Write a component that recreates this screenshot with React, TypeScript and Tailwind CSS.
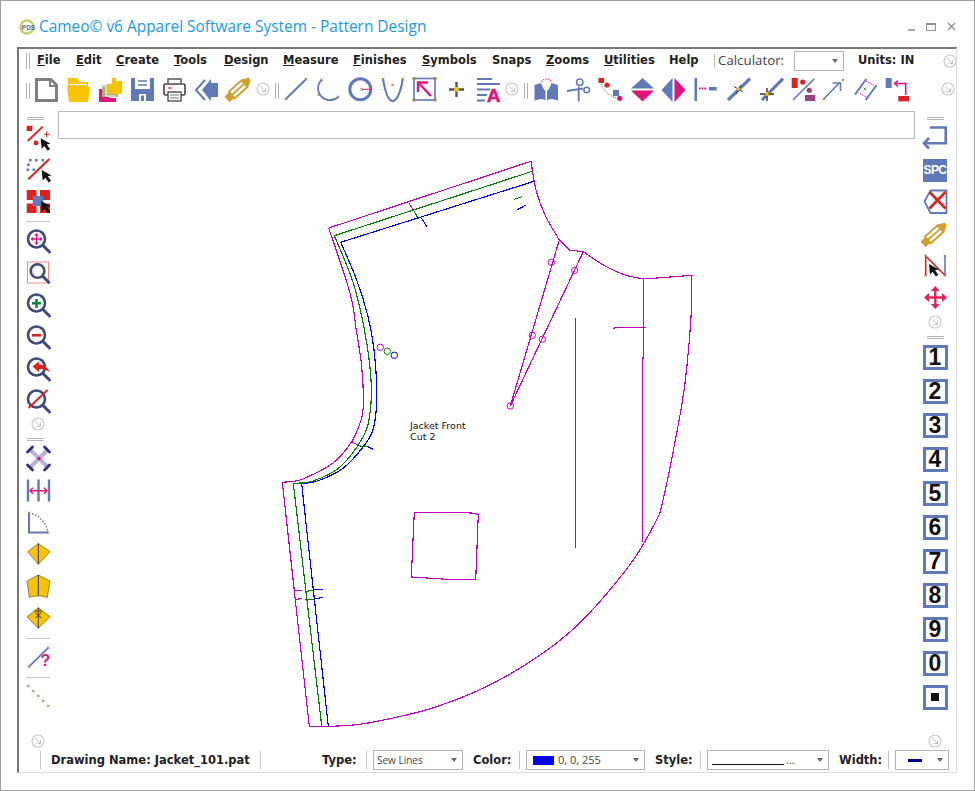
import type { ReactNode } from "react";

const BLUE = "#6079b8";
const PINK = "#e0147c";
const RED = "#e0201f";
const GOLD = "#f8c300";
const NAVY = "#3f4d78";
const TAN = "#a08850";
const MAG = "#c000c0";
const GRN = "#008000";
const BLU = "#0000ff";

// icons are written in page coordinates, the viewBox moves them into their slot
function Ic({ x, y, children }: { x: number; y: number; children: ReactNode }) {
  return (
    <svg width={32} height={32} viewBox={`${x} ${y} 32 32`} className="shrink-0">
      {children}
    </svg>
  );
}

function Tan({ x, y }: { x: number; y: number }) {
  return (
    <path
      d={`M${x - 1.3} ${y - 1.3}l2.6 2.6M${x + 1.3} ${y - 1.3}l-2.6 2.6`}
      stroke={TAN}
      strokeWidth={1}
      fill="none"
    />
  );
}

function Cursor({ x, y }: { x: number; y: number }) {
  return (
    <path
      d={`M${x} ${y}l1 10.5l2.6-2.8l3.4 4.8l2.4-1.7l-3.4-4.6l3.8-.8z`}
      fill="#111"
    />
  );
}

function Pencil({ cx, cy }: { cx: number; cy: number }) {
  return (
    <g transform={`translate(${cx} ${cy}) rotate(-42)`}>
      <rect x={-9} y={-4.4} width={17} height={8.8} fill="#fff" stroke="#cf9f2c" strokeWidth={1.9} />
      <path d="M-9 0H8" stroke="#cf9f2c" strokeWidth={1.8} />
      <path d="M-15.5 -3.8H-9V3.8H-15.5z" fill="#cf9f2c" />
      <path d="M8 -5.4L15 -1.5V1.5L8 5.4z" fill="#cf9f2c" />
    </g>
  );
}

function Glass({ y, x = 36.5, r = 8.5, children }: { y: number; x?: number; r?: number; children?: ReactNode }) {
  return (
    <g>
      <circle cx={x} cy={y} r={r} fill="none" stroke={NAVY} strokeWidth={2.6} />
      <path d={`M${x + r * 0.75} ${y + r * 0.75}L${x + r + 4.5} ${y + r + 4.5}`} stroke={NAVY} strokeWidth={3} strokeLinecap="round" />
      {children}
    </g>
  );
}

function ArrowCircle() {
  return (
    <svg width={16} height={16} viewBox="0 0 16 16" className="shrink-0">
      <circle cx={8} cy={8} r={6} fill="none" stroke="#cacaca" strokeWidth={1.2} />
      <path d="M5.2 5.2L10.4 10.4M10.6 6.6V10.6H6.6" fill="none" stroke="#c0c0c0" strokeWidth={1} />
    </svg>
  );
}

function GripV() {
  return (
    <div className="flex h-[16px] w-[4px] shrink-0 justify-between">
      <div className="w-px bg-[#b0b0b0]" />
      <div className="w-px bg-[#b0b0b0]" />
    </div>
  );
}

function GripH({ w = 17 }: { w?: number }) {
  return (
    <div className="flex h-[10px] shrink-0 flex-col justify-end gap-px pb-px" style={{ width: w }}>
      <div className="h-px bg-[#b8b8b8]" />
      <div className="h-px bg-[#b8b8b8]" />
    </div>
  );
}

function Sep({ h }: { h: number }) {
  return (
    <div className="flex w-[24px] shrink-0 items-center" style={{ height: h }}>
      <div className="h-px w-full bg-[#c4c4c4]" />
    </div>
  );
}

function Caret() {
  return <span className="h-0 w-0 border-x-[3.5px] border-t-[4px] border-x-transparent border-t-[#666]" />;
}

function Select({ w, children }: { w: number; children?: ReactNode }) {
  return (
    <div
      className="flex h-[20px] shrink-0 items-center border border-[#b4b4b4] bg-white pr-[5px] pl-[3px]"
      style={{ width: w }}
    >
      <div className="flex min-w-0 flex-1 items-center">{children}</div>
      <Caret />
    </div>
  );
}

// smooth line through measured points
function smooth(p: number[][]) {
  let d = `M${p[0][0]} ${p[0][1]}`;
  for (let i = 0; i < p.length - 1; i++) {
    const a = p[Math.max(i - 1, 0)];
    const b = p[i];
    const c = p[i + 1];
    const e = p[Math.min(i + 2, p.length - 1)];
    d += `C${b[0] + (c[0] - a[0]) / 6} ${b[1] + (c[1] - a[1]) / 6} ${c[0] - (e[0] - b[0]) / 6} ${c[1] - (e[1] - b[1]) / 6} ${c[0]} ${c[1]}`;
  }
  return d;
}

const menus = [
  { u: "F", r: "ile", w: 39 },
  { u: "E", r: "dit", w: 40 },
  { u: "C", r: "reate", w: 58 },
  { u: "T", r: "ools", w: 50 },
  { u: "D", r: "esign", w: 59 },
  { u: "M", r: "easure", w: 70 },
  { u: "F", r: "inishes", w: 69 },
  { u: "S", r: "ymbols", w: 70 },
  { u: "", r: "Snaps", w: 54 },
  { u: "Z", r: "ooms", w: 58 },
  { u: "U", r: "tilities", w: 65 },
  { u: "", r: "Help", w: 45 },
];

const numbers = ["1", "2", "3", "4", "5", "6", "7", "8", "9", "0"];

function TopTools() {
  return (
    <>
      <Ic x={30} y={73}>
        <path d="M36.5 79.5H51L56.5 85V100.5H36.5z" fill="#fff" stroke="#808080" strokeWidth={3} />
        <path d="M50 79V86H57" fill="none" stroke="#808080" strokeWidth={2} />
      </Ic>
      <Ic x={62} y={73}>
        <path d="M68 78H77L80 82H88V90H68z" fill={GOLD} />
        <path d="M69 84.5H87" stroke="#fff" strokeWidth={1} />
        <path d="M67 87H90L88 102H69z" fill={GOLD} />
      </Ic>
      <Ic x={94} y={73}>
        <path d="M99 89H109V98H116V102H99z" fill={PINK} />
        <path d="M102 85H118V97H102z" fill="#a9b56f" />
        <path d="M107 84H112V78H116V81H122V94H107z" fill={GOLD} />
        <path d="M101 86H106V96H116" fill="none" stroke="#fff" strokeWidth={1} />
      </Ic>
      <Ic x={126} y={73}>
        <path d="M131 78H154V101H131z" fill={BLUE} />
        <path d="M135 78H150V89H135z" fill="#fff" />
        <path d="M138 81H147M138 85H147" stroke={BLUE} strokeWidth={1.4} />
        <path d="M139 94H146V101H139z" fill="#fff" />
        <path d="M141 95.5H144V101H141z" fill={BLUE} />
      </Ic>
      <Ic x={158} y={73}>
        <path d="M168 83V79H181V83" fill="none" stroke="#555" strokeWidth={1.5} />
        <rect x={164} y={84} width={21} height={11} rx={1.5} fill="#fff" stroke="#444" strokeWidth={1.6} />
        <path d="M168 88H172" stroke={RED} strokeWidth={1.2} />
        <rect x={168} y={92} width={13} height={9} fill="#fff" stroke="#444" strokeWidth={1.3} />
        <path d="M170 95H179M170 98H179" stroke="#777" strokeWidth={1} />
      </Ic>
      <Ic x={190} y={73}>
        <path d="M205 80L196 90L205 100" fill="none" stroke={BLUE} strokeWidth={2} />
        <path d="M202 90L211 79V83H218V97H211V101z" fill={BLUE} />
      </Ic>
      <Ic x={222} y={73}>
        <Pencil cx={238.5} cy={89} />
      </Ic>
    </>
  );
}

function DraftTools() {
  return (
    <>
      <Ic x={280} y={73}>
        <path d="M286 98.7L306 79.3" stroke={BLUE} strokeWidth={2} />
        <Tan x={286} y={99} />
        <Tan x={306} y={79} />
      </Ic>
      <Ic x={312} y={73}>
        <path d="M321.7 79.7C315 87 318 98 328 100C332 100.5 336 99 338.3 97" fill="none" stroke={BLUE} strokeWidth={1.8} />
        <Tan x={321.7} y={79.7} />
        <Tan x={318.6} y={94.7} />
        <Tan x={338.3} y={97} />
      </Ic>
      <Ic x={344} y={73}>
        <circle cx={360.3} cy={89.3} r={10.5} fill="#fff" stroke={BLUE} strokeWidth={3} />
        <path d="M362 89.3H371" stroke={PINK} strokeWidth={1} />
        <Tan x={361.5} y={89.3} />
      </Ic>
      <Ic x={376} y={73}>
        <path d="M383 79C385 91 388 101 392.7 101C397 101 401 91 402.7 79" fill="none" stroke={BLUE} strokeWidth={2} />
        <Tan x={383} y={79} />
        <Tan x={402.7} y={79} />
        <Tan x={392.7} y={85} />
      </Ic>
      <Ic x={408} y={73}>
        <rect x={414} y={78.5} width={21} height={21.5} fill="#fff" stroke={BLUE} strokeWidth={1.6} />
        <path d="M431 96L419.5 84" stroke={PINK} strokeWidth={2.4} />
        <path d="M418 92V82.5H428" fill="none" stroke={PINK} strokeWidth={2.4} />
        <path d="M412.5 77h3v3h-3zM433.5 77h3v3h-3zM412.5 98.5h3v3h-3zM433.5 98.5h3v3h-3z" fill={TAN} />
      </Ic>
      <Ic x={441} y={73}>
        <path d="M450 89.5H465M457.5 82V97" stroke="#555" strokeWidth={2.4} />
        <circle cx={457.5} cy={89.5} r={2.4} fill={GOLD} />
      </Ic>
      <Ic x={472} y={73}>
        <path d="M477 79H492M477 84H500M477 89.5H490M477 95H487M477 100.5H485" stroke={BLUE} strokeWidth={1.8} />
        <text x={493.5} y={101.5} textAnchor="middle" fontSize={19} fontWeight={700} fill={PINK} stroke={PINK} strokeWidth={0.5} fontFamily="Liberation Sans, sans-serif">
          A
        </text>
      </Ic>
    </>
  );
}

function PatternTools() {
  return (
    <>
      <Ic x={530} y={73}>
        <path d="M534.5 85L541 83L543 88L545.5 91V100L541 99L534.5 100.5z" fill={BLUE} />
        <path d="M558 85L551.5 83L549.5 88L547 91V100L551.5 99L558 100.5z" fill={BLUE} />
        <path d="M541 82C543 78 550 78 552 82" fill="none" stroke={PINK} strokeWidth={1} strokeDasharray="1.5 1" />
      </Ic>
      <Ic x={562} y={73}>
        <path d="M578.7 86.5V101.5M567 91L583 88.5" stroke={BLUE} strokeWidth={1.8} />
        <circle cx={579.7} cy={82.3} r={3.2} fill="#fff" stroke={BLUE} strokeWidth={1.5} />
        <circle cx={586.7} cy={90} r={2.8} fill="#fff" stroke={BLUE} strokeWidth={1.5} />
      </Ic>
      <Ic x={594} y={73}>
        <path d="M601.5 84C603 90 609 96 617 98" fill="none" stroke="#444" strokeWidth={1} strokeDasharray="1 1.5" />
        <rect x={598.5} y={78} width={5.5} height={5} fill={RED} />
        <circle cx={607} cy={85} r={2.6} fill={RED} />
        <rect x={613} y={90} width={6} height={6} fill={BLUE} />
        <circle cx={619.7} cy={98.3} r={2.6} fill={PINK} />
      </Ic>
      <Ic x={626} y={73}>
        <path d="M642.5 78L654 88.5H631z" fill={BLUE} />
        <path d="M631 90.5H654L642.5 101.5z" fill={PINK} />
      </Ic>
      <Ic x={659} y={73}>
        <path d="M673.5 78V102L662.5 90z" fill={BLUE} />
        <path d="M675.5 78V102L686.5 90z" fill={PINK} />
      </Ic>
      <Ic x={691} y={73}>
        <path d="M695.5 78H698V101H695.5z" fill={BLUE} />
        <path d="M700 88.5H708" stroke={PINK} strokeWidth={2} strokeDasharray="1.6 1" />
        <path d="M710 87H717.7V90.5H710z" fill={BLUE} />
      </Ic>
      <Ic x={722} y={73}>
        <path d="M728 100L750 78.7" stroke={BLUE} strokeWidth={3.2} />
        <path d="M734 86.5L743 92M736 94L741 85" stroke="#333" strokeWidth={1} />
        <circle cx={738.3} cy={89} r={1.7} fill={GOLD} />
      </Ic>
      <Ic x={753} y={73}>
        <path d="M761 100L782 78.7" stroke={BLUE} strokeWidth={3.2} />
        <path d="M759 94H773M766 88V101" stroke="#333" strokeWidth={1.4} />
        <circle cx={766} cy={94} r={1.9} fill={GOLD} />
      </Ic>
      <Ic x={785} y={73}>
        <rect x={790.7} y={78} width={6} height={10} fill={RED} />
        <circle cx={801.7} cy={82} r={2.6} fill={RED} />
        <path d="M792 100L813.3 78.7" stroke={BLUE} strokeWidth={1.6} />
        <circle cx={808.3} cy={90.3} r={2.6} fill="#9c3d7e" />
        <rect x={804} y={95} width={10.3} height={6} fill="#9c3d7e" />
      </Ic>
      <Ic x={819} y={73}>
        <path d="M825 98.7L841 82.3M833.5 83H841.5V91" fill="none" stroke={BLUE} strokeWidth={1.6} />
        <Tan x={825} y={99} />
        <Tan x={844} y={80} />
      </Ic>
      <Ic x={851} y={73}>
        <path d="M856 94.5L867.3 79M866.7 100L877.7 85" stroke={BLUE} strokeWidth={2} />
        <path d="M867 81L875 85.5M861 93.5L869 98" stroke={PINK} strokeWidth={1} strokeDasharray="1.5 1" />
        <Tan x={866} y={89} />
      </Ic>
      <Ic x={883} y={73}>
        <rect x={886.7} y={78} width={6} height={10} fill={BLUE} />
        <path d="M897 83.5H906.7V95" fill="none" stroke={PINK} strokeWidth={1.6} />
        <path d="M899 80.5L895.5 83.5L899 86.5" fill="none" stroke={PINK} strokeWidth={1.6} />
        <rect x={899.3} y={96} width={10.7} height={5.4} fill={RED} />
      </Ic>
    </>
  );
}

function LeftTools() {
  return (
    <div className="flex w-[39px] shrink-0 flex-col items-start pl-[3px]">
      <div className="ml-[5px]">
        <GripH />
      </div>
      <div className="h-px" />
      <Ic x={22} y={122}>
        <rect x={26.7} y={125.7} width={5.6} height={5.4} fill={RED} />
        <path d="M27.7 141L42.7 126.7" stroke={RED} strokeWidth={1.8} />
        <circle cx={36} cy={143} r={2.4} fill={RED} />
        <path d="M44 134.3H49.5M46.7 131.5V137" stroke={RED} strokeWidth={1} />
        <Cursor x={40.7} y={138.3} />
      </Ic>
      <Ic x={22} y={154}>
        <path
          d="M29 159h2.6v2.6h-2.6zM35 159h2.6v2.6h-2.6zM41.5 159h2.6v2.6h-2.6zM27 163.5h2.6v2.6h-2.6zM26.5 168.5h2.6v2.6h-2.6zM32.5 168.5h2.6v2.6h-2.6z"
          fill={BLUE}
        />
        <path d="M28.3 179.3L49.3 159" stroke={RED} strokeWidth={2} />
        <Cursor x={41.7} y={170} />
      </Ic>
      <Ic x={22} y={186}>
        <path d="M26.7 190H36.5V200H26.7zM40 190H50V200H40zM26.7 203.5H36.5V213H26.7zM40 203.5H50V213H40z" fill={RED} />
        <rect x={32.7} y={196} width={10.6} height={10} fill={BLUE} />
        <Cursor x={41} y={201} />
      </Ic>
      <div className="ml-[4px]">
        <Sep h={6} />
      </div>
      <Ic x={22} y={224}>
        <Glass y={239}>
          <path d="M31 239H42M36.5 233.5V244.5" stroke={PINK} strokeWidth={1.4} />
          <path d="M31 239l2-1.8v3.6zM42 239l-2-1.8v3.6zM36.5 233.5l-1.8 2h3.6zM36.5 244.5l-1.8-2h3.6z" fill={PINK} stroke={PINK} strokeWidth={0.5} />
        </Glass>
      </Ic>
      <Ic x={22} y={256}>
        <rect x={27.5} y={262} width={21} height={21} fill="#fff" stroke="#f08c8c" strokeWidth={1} />
        <Glass y={271} x={37.5} r={6.8}>
          <path d="M33.5 274C32 271.5 33 268.5 35.5 267" fill="none" stroke="#c8c8c8" strokeWidth={1.2} strokeDasharray="1 1" />
        </Glass>
      </Ic>
      <Ic x={22} y={288}>
        <Glass y={303}>
          <path d="M32 303.3H41M36.5 299V308" stroke="#0a8a3c" strokeWidth={2.6} />
        </Glass>
      </Ic>
      <Ic x={22} y={320}>
        <Glass y={335}>
          <path d="M32 335.3H41" stroke={RED} strokeWidth={2.6} />
        </Glass>
      </Ic>
      <Ic x={22} y={352}>
        <Glass y={367}>
          <path d="M32.5 366.5L39 361.5V364.5C43 364.5 47 367 50 372C46 369.5 43 368.5 39 369V372z" fill={RED} />
        </Glass>
      </Ic>
      <Ic x={22} y={384}>
        <Glass y={399}>
          <path d="M28.5 408L47.5 390" stroke={RED} strokeWidth={1.8} />
        </Glass>
      </Ic>
      <div className="ml-[8px]">
        <ArrowCircle />
      </div>
      <div className="ml-[5px]">
        <GripH />
      </div>
      <Ic x={22} y={442}>
        <path d="M30.5 450L47.5 467M47.5 450L30.5 467" stroke="#b9b2d8" strokeWidth={4} />
        <path d="M27.5 452L32.5 447M44.5 447L49.5 452M27.5 465L32.5 470M44.5 470L49.5 465" stroke="#2f2f80" strokeWidth={2.8} strokeLinecap="round" />
        <circle cx={39} cy={458.5} r={1.8} fill={PINK} />
      </Ic>
      <Ic x={22} y={474}>
        <path d="M28 479.5V501.5M38.5 479.5V501.5M49 479.5V501.5" stroke={BLUE} strokeWidth={2.4} />
        <path d="M30 490.7H47M33 487.7L30 490.7L33 493.7M44 487.7L47 490.7L44 493.7" fill="none" stroke={PINK} strokeWidth={1.4} />
      </Ic>
      <Ic x={22} y={506}>
        <path d="M29 514V532.5H48" fill="none" stroke={BLUE} strokeWidth={2} />
        <path d="M29 513C38 514 46 522 48 532" fill="none" stroke="#444" strokeWidth={1.2} strokeDasharray="1.2 2" />
        <Tan x={29} y={513} />
        <Tan x={48} y={532.5} />
      </Ic>
      <Ic x={22} y={538}>
        <path d="M38.3 543.5L50 551.7L38.3 564.3L27.5 551.7z" fill={GOLD} stroke="#6b5a3a" strokeWidth={0.7} />
        <path d="M38.3 543.5V564.3" stroke="#333" strokeWidth={1} />
      </Ic>
      <Ic x={22} y={570}>
        <path d="M38.3 575L50 581L47.3 597.5C42 595.5 34.5 595.5 29.3 597.5L27 581z" fill={GOLD} stroke="#6b5a3a" strokeWidth={0.7} />
        <path d="M38.3 575V595.5" stroke="#333" strokeWidth={1} />
      </Ic>
      <Ic x={22} y={602}>
        <path d="M38.3 607.7L50 616.7L38.3 628.3L27 616.7z" fill={GOLD} stroke="#6b5a3a" strokeWidth={0.7} />
        <path d="M38.3 607.7V628.3M34.5 611H42M35 618L41.5 612.5M41.5 618L35 612.5" stroke="#4a3d1e" strokeWidth={1} />
      </Ic>
      <div className="ml-[4px]">
        <Sep h={8} />
      </div>
      <Ic x={22} y={642}>
        <path d="M29 666.7L48.3 647.7" stroke={BLUE} strokeWidth={1.8} />
        <Tan x={29} y={666.7} />
        <Tan x={48.3} y={647.7} />
        <text x={45.5} y={666} textAnchor="middle" fontSize={16} fontWeight={700} fill={PINK} fontFamily="Liberation Sans, sans-serif">
          ?
        </text>
      </Ic>
      <div className="ml-[4px]">
        <Sep h={6} />
      </div>
      <Ic x={22} y={680}>
        <Tan x={28.3} y={686} />
        <Tan x={33.3} y={691} />
        <Tan x={38.3} y={696} />
        <Tan x={43.3} y={701} />
        <Tan x={48.3} y={706} />
      </Ic>
      <div className="mt-auto mb-[1px] ml-[8px]">
        <ArrowCircle />
      </div>
    </div>
  );
}

function RightTools() {
  return (
    <div className="flex w-[37px] shrink-0 flex-col items-start">
      <div className="ml-[8px]">
        <GripH />
      </div>
      <div className="h-px" />
      <Ic x={919} y={122}>
        <path d="M930 127.5H945.7V143.3H926" fill="none" stroke={BLUE} strokeWidth={2.6} />
        <path d="M929 138L924 143.3L929 148.5" fill="none" stroke={BLUE} strokeWidth={2.6} />
      </Ic>
      <div className="flex h-[32px] w-[32px] items-center justify-center">
        <div className="flex h-[23px] w-[24px] items-center justify-center bg-[#6079b8] font-['Liberation_Sans',sans-serif] text-[12px] font-bold tracking-[-0.6px] text-white">
          SPC
        </div>
      </div>
      <Ic x={919} y={186}>
        <path d="M930.5 190.5H946.5V213H930.5L924.5 201.5z" fill="#fff" stroke={BLUE} strokeWidth={1.8} />
        <path d="M929.5 192L945.5 208.5M945.5 192L929.5 208.5" stroke={RED} strokeWidth={2.6} />
      </Ic>
      <Ic x={919} y={218}>
        <Pencil cx={934.5} cy={234} />
      </Ic>
      <Ic x={919} y={250}>
        <path d="M945 256V275.5" stroke={BLUE} strokeWidth={1.6} />
        <path d="M925.7 275.5V256L945 275.5" fill="none" stroke={RED} strokeWidth={1.6} />
        <Tan x={925.7} y={256} />
        <Tan x={945} y={256} />
        <Tan x={925.7} y={275.5} />
        <Tan x={945} y={275.5} />
        <Cursor x={929} y={264} />
      </Ic>
      <Ic x={919} y={282}>
        <path d="M935.3 289V306M927 297.5H944" stroke="#e0245e" strokeWidth={2.4} />
        <path d="M935.3 286l-4.4 5h8.8zM935.3 309l-4.4-5h8.8zM924 297.5l5-4.4v8.8zM947 297.5l-5-4.4v8.8z" fill="#e0245e" />
      </Ic>
      <div className="ml-[8px]">
        <ArrowCircle />
      </div>
      <div className="ml-[8px]">
        <GripH />
      </div>
      {numbers.map((n) => (
        <div key={n} className="flex h-[34px] w-[32px] items-center justify-center">
          <div className="flex h-[25px] w-[25px] items-center justify-center border-[3px] border-[#6079b8] bg-white font-['Liberation_Sans',sans-serif] text-[23px] leading-none font-bold text-[#111]">
            {n}
          </div>
        </div>
      ))}
      <div className="flex h-[34px] w-[32px] items-center justify-center">
        <div className="flex h-[25px] w-[25px] items-center justify-center border-[3px] border-[#6079b8] bg-white">
          <div className="h-[8px] w-[8px] bg-[#111]" />
        </div>
      </div>
      <div className="mt-auto mb-[1px] ml-[8px]">
        <ArrowCircle />
      </div>
    </div>
  );
}

function Drawing() {
  const magLines = [
    [[328.7, 228], [531, 161.3]],
    [[559.3, 240], [510.3, 406], [583.3, 251.7]],
    [[575.5, 318.3], [575.5, 548.3]],
    [[643.5, 279], [643.5, 358], [642.5, 358], [642.5, 541.7]],
    [[613.3, 328.3], [616.7, 327.5], [646, 327.5]],
    [[414.3, 512.3], [442.3, 512.3], [471.7, 513], [478.3, 514.3], [475.7, 579.3], [446.7, 579.3], [411.3, 577], [414.3, 512.3]],
    [[309.3, 726.3], [282.3, 482.3], [290, 481.7]],
    [[559.3, 240], [569.3, 250], [583.3, 251.7]],
    [[409, 203.3], [414, 211]],
    [[351.7, 441.7], [360, 446]],
    [[515, 188], [520, 185.7]],
    [[294.3, 590.5], [301.7, 590.5]],
    [[295.7, 599.5], [301.7, 598.5]],
    [[643.5, 279], [692.7, 275.3], [691.7, 276]],
  ];
  const grnLines = [
    [[334.3, 235.7], [533.3, 171]],
    [[293.3, 483.3], [321.7, 726]],
    [[414, 211], [418.3, 219]],
    [[360, 446], [368, 446.7]],
    [[514.3, 199.3], [521.7, 196.7]],
    [[305, 591.7], [313.3, 590]],
    [[305, 599.5], [315, 599.5]],
  ];
  const bluLines = [
    [[340.7, 242.3], [535, 181]],
    [[301.7, 484], [328.3, 726]],
    [[368, 446.7], [373, 449.3]],
    [[517, 210], [526, 205]],
    [[313.3, 590], [322.7, 589.3]],
    [[315, 599], [322.7, 597.3]],
    [[421.7, 218.3], [426.7, 226.7]],
  ];
  const magCurves = [
    [[531, 161.3], [536, 190], [545, 215], [559.3, 240]],
    [[583.3, 251.7], [605, 266], [625, 275], [643.5, 279]],
    [[691.7, 276], [691, 316.7], [685, 383], [676.7, 433], [663, 500], [655, 523], [626.7, 569], [570, 632], [503, 678], [436.7, 706.7], [370, 722.7], [338, 726], [309.3, 726.3]],
    [[328.7, 228], [350, 293], [356.7, 333], [361.7, 366.7], [363.3, 406.7], [360, 423], [351.7, 441.7], [333, 463], [303, 479], [290, 481.7]],
  ];
  const grnCurves = [
    [[334.3, 235.7], [353.3, 283], [365, 333], [371, 380], [370, 413], [363, 437], [340, 467], [313, 481], [293.3, 483.3]],
  ];
  const bluCurves = [
    [[340.7, 242.3], [356.7, 280], [368, 316.7], [374, 350], [376.7, 385], [376, 412], [370, 436.7], [345, 466.7], [320, 480], [301.7, 484]],
  ];
  const rings = [
    [551.3, 262.3],
    [574.7, 270.3],
    [532.3, 335.3],
    [542.3, 339.3],
    [510.3, 406],
    [380.3, 347.3],
  ];

  const draw = (lines: number[][][], curves: number[][][], color: string) => (
    <g fill="none" stroke={color} strokeWidth={1.15}>
      {lines.map((l, i) => (
        <polyline key={i} points={l.map((p) => p.join(",")).join(" ")} />
      ))}
      {curves.map((c, i) => (
        <path key={i} d={smooth(c)} />
      ))}
    </g>
  );

  return (
    <svg width={861} height={611} viewBox="58 139 861 611" className="block" shapeRendering="crispEdges">
      {draw(magLines, magCurves, MAG)}
      {draw(grnLines, grnCurves, GRN)}
      {draw(bluLines, bluCurves, BLU)}
      <g fill="none" strokeWidth={1} shapeRendering="auto">
        {rings.map((r, i) => (
          <circle key={i} cx={r[0]} cy={r[1]} r={3.2} stroke={MAG} />
        ))}
        <circle cx={387.3} cy={351.3} r={3.2} stroke={GRN} />
        <circle cx={394.3} cy={355.3} r={3.2} stroke={BLU} />
      </g>
      <text x={410} y={429} fontSize={9.5} fill="#111" fontFamily="DejaVu Sans, sans-serif">
        Jacket Front
      </text>
      <text x={410} y={440} fontSize={9.5} fill="#111" fontFamily="DejaVu Sans, sans-serif">
        Cut 2
      </text>
    </svg>
  );
}

function StatusSep() {
  return <div className="mt-[1px] h-[18px] w-px shrink-0 bg-[#c8c8c8]" />;
}

export default function App() {
  return (
    <div className="h-[791px] w-[975px] overflow-hidden border border-[#a0a0a0] bg-white font-['DejaVu_Sans',sans-serif] text-[#222]">
      {/* title bar */}
      <div className="flex h-[46px] items-center pt-[5px] pl-[18px]">
        <svg width={16} height={16} viewBox="0 0 16 16" className="shrink-0">
          <circle cx={8} cy={8} r={6.5} fill="none" stroke="#c3cf6a" strokeWidth={2.4} />
          <text x={9.5} y={10.5} textAnchor="middle" fontSize={6.5} fontWeight={700} fill="#4a6fa5" fontFamily="Liberation Sans, sans-serif">
            PDS
          </text>
        </svg>
        <span className="ml-[4px] font-['Open_Sans',sans-serif] text-[15.45px] text-[#1a9ae6]">
          Cameo© v6 Apparel Software System - Pattern Design
        </span>
        <div className="mr-[18px] ml-auto flex items-center gap-[11px]">
          <div className="mt-[6px] h-[2px] w-[7px] bg-[#a8a8a8]" />
          <div className="h-[8px] w-[10px] border border-t-2 border-[#909090]" />
          <svg width={9} height={9} viewBox="0 0 9 9">
            <path d="M1 1L8 8M8 1L1 8" stroke="#909090" strokeWidth={1.4} />
          </svg>
        </div>
      </div>

      {/* application frame */}
      <div className="ml-[16px] w-[940px] border-t-2 border-r border-b border-l-2 border-t-[#777] border-r-[#dcdcdc] border-b-[#dcdcdc] border-l-[#777]">
        {/* menu */}
        <div className="flex h-[23px] items-center pl-[7px]">
          <GripV />
          <div className="ml-[7px] flex text-[11.5px] font-bold">
            {menus.map((m) => (
              <span key={m.r} className="shrink-0" style={{ width: m.w }}>
                <u>{m.u}</u>
                {m.r}
              </span>
            ))}
          </div>
          <div className="h-[14px] w-px shrink-0 bg-[#b8b8b8]" />
          <span className="ml-[3px] w-[76px] shrink-0 font-['Open_Sans',sans-serif] text-[13.3px] text-[#444]">Calculator:</span>
          <div className="flex h-[20px] w-[50px] shrink-0 items-center justify-end border border-[#b4b4b4] pr-[5px]">
            <Caret />
          </div>
          <span className="ml-[14px] w-[80px] shrink-0 text-[11.5px] font-bold">Units: IN</span>
          <div className="ml-[4px]">
            <ArrowCircle />
          </div>
        </div>

        {/* toolbar */}
        <div className="flex h-[36px] items-start pt-[1px] pl-[7px]">
          <div className="mt-[10px] flex">
            <GripV />
          </div>
          <TopTools />
          <div className="mt-[8px] ml-[1px] w-[20px]">
            <ArrowCircle />
          </div>
          <div className="mt-[10px] mr-[1px]">
            <GripV />
          </div>
          <DraftTools />
          <div className="mt-[8px] w-[16px]">
            <ArrowCircle />
          </div>
          <div className="mt-[10px] ml-[4px]">
            <GripV />
          </div>
          <div className="w-[2px]" />
          <PatternTools />
          <div className="mt-[8px] ml-[26px]">
            <ArrowCircle />
          </div>
        </div>

        {/* work area */}
        <div className="flex h-[642px] pt-[3px]">
          <LeftTools />
          <div className="flex w-[861px] shrink-0 flex-col">
            <div className="h-[28px] w-[857px] border border-[#b8b8b8] bg-white" />
            <Drawing />
          </div>
          <RightTools />
        </div>

        {/* status */}
        <div className="flex h-[22px] items-start text-[11.5px] leading-[20px] font-bold">
          <div className="ml-[21px]">
            <StatusSep />
          </div>
          <span className="ml-[10px] w-[209px] shrink-0">Drawing Name: Jacket_101.pat</span>
          <StatusSep />
          <span className="ml-[61px] w-[44px] shrink-0">Type:</span>
          <StatusSep />
          <div className="ml-[6px]">
            <Select w={90}>
              <span className="font-['Open_Sans',sans-serif] text-[10px] font-normal text-[#444]">Sew Lines</span>
            </Select>
          </div>
          <span className="ml-[10px] w-[46px] shrink-0">Color:</span>
          <StatusSep />
          <div className="ml-[6px]">
            <Select w={119}>
              <span className="ml-[3px] h-[9px] w-[21px] bg-[#0000ff]" />
              <span className="ml-[4px] font-['Open_Sans',sans-serif] text-[11px] font-normal text-[#444]">0, 0, 255</span>
            </Select>
          </div>
          <span className="ml-[10px] w-[45px] shrink-0">Style:</span>
          <StatusSep />
          <div className="ml-[6px]">
            <Select w={122}>
              <span className="ml-[1px] h-px w-[72px] translate-y-[4px] bg-[#111]" />
              <span className="ml-[2px] font-['Open_Sans',sans-serif] text-[11px] font-normal text-[#444]">...</span>
            </Select>
          </div>
          <span className="ml-[10px] w-[49px] shrink-0">Width:</span>
          <StatusSep />
          <div className="ml-[6px]">
            <Select w={54}>
              <span className="ml-[9px] h-[3px] w-[14px] bg-[#000080]" />
            </Select>
          </div>
        </div>
      </div>
    </div>
  );
}
